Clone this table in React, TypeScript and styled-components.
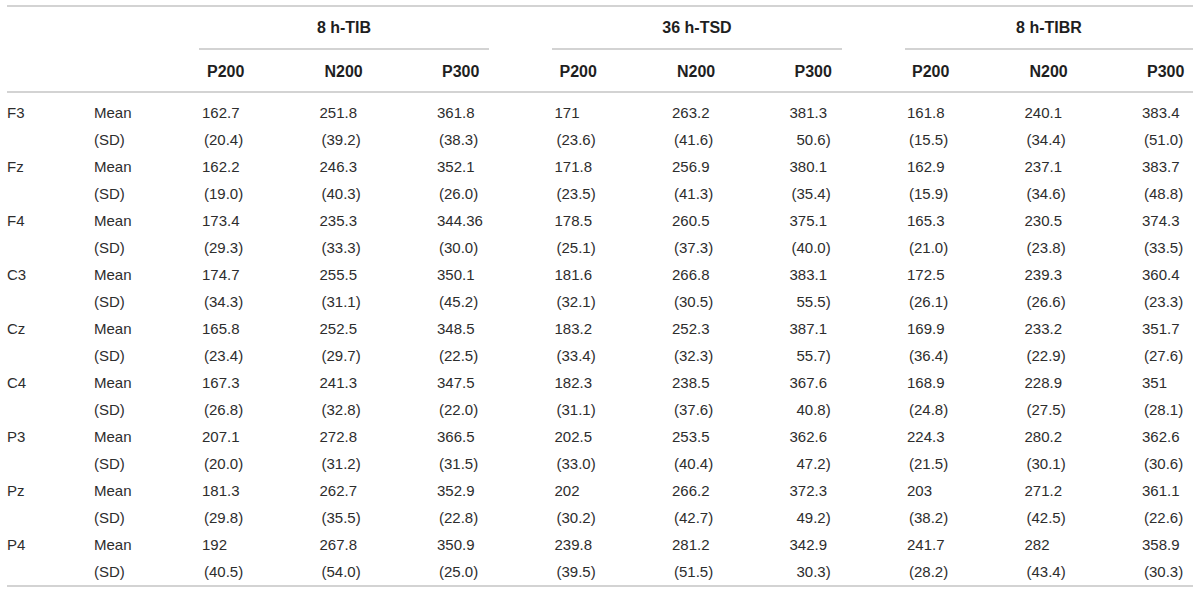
import React from 'react';
import styled, { createGlobalStyle } from 'styled-components';

const GlobalStyle = createGlobalStyle`
  *, *::before, *::after {
    box-sizing: border-box;
  }
  html, body {
    margin: 0;
    padding: 0;
    background: #ffffff;
  }
  body {
    font-family: "Liberation Sans", Arial, Helvetica, sans-serif;
    color: #2d2d2d;
  }
`;

const COLUMNS = '87px 105px repeat(8, 117.5px) 54px';
const RULE = '2px solid #d3d3d3';

const Table = styled.div`
  width: 1186px;
  margin: 5px 7px 0;
  border-top: ${RULE};
  border-bottom: ${RULE};
`;

const GroupRow = styled.div`
  display: flex;
  gap: 63px;
  padding-left: 192px;
  height: 43px;
`;

const GroupLabel = styled.div<{ $last?: boolean }>`
  display: flex;
  align-items: center;
  justify-content: center;
  width: ${({ $last }) => ($last ? '288px' : '290px')};
  border-bottom: ${RULE};
  font-size: 16px;
  font-weight: 700;
  color: #1f1f1f;
`;

const HeadRow = styled.div`
  display: grid;
  grid-template-columns: ${COLUMNS};
  height: 43px;
  align-items: center;
  border-bottom: ${RULE};
`;

const HeadCell = styled.div`
  padding-left: 8px;
  padding-top: 2px;
  font-size: 16px;
  font-weight: 700;
  color: #1f1f1f;
`;

const Body = styled.div`
  padding-top: 6px;
`;

const Row = styled.div`
  display: grid;
  grid-template-columns: ${COLUMNS};
  height: 27px;
  align-items: center;
  font-size: 15px;
`;

const Label = styled.div`
  white-space: nowrap;
`;

const Value = styled.div<{ $indent: number }>`
  padding-left: ${({ $indent }) => $indent}px;
  white-space: nowrap;
`;

type Site = { name: string; mean: string[]; sd: string[] };

const groups = ['8 h-TIB', '36 h-TSD', '8 h-TIBR'];
const components = ['P200', 'N200', 'P300'];

const sites: Site[] = [
  {
    name: 'F3',
    mean: ['162.7', '251.8', '361.8', '171', '263.2', '381.3', '161.8', '240.1', '383.4'],
    sd: ['(20.4)', '(39.2)', '(38.3)', '(23.6)', '(41.6)', '50.6)', '(15.5)', '(34.4)', '(51.0)'],
  },
  {
    name: 'Fz',
    mean: ['162.2', '246.3', '352.1', '171.8', '256.9', '380.1', '162.9', '237.1', '383.7'],
    sd: ['(19.0)', '(40.3)', '(26.0)', '(23.5)', '(41.3)', '(35.4)', '(15.9)', '(34.6)', '(48.8)'],
  },
  {
    name: 'F4',
    mean: ['173.4', '235.3', '344.36', '178.5', '260.5', '375.1', '165.3', '230.5', '374.3'],
    sd: ['(29.3)', '(33.3)', '(30.0)', '(25.1)', '(37.3)', '(40.0)', '(21.0)', '(23.8)', '(33.5)'],
  },
  {
    name: 'C3',
    mean: ['174.7', '255.5', '350.1', '181.6', '266.8', '383.1', '172.5', '239.3', '360.4'],
    sd: ['(34.3)', '(31.1)', '(45.2)', '(32.1)', '(30.5)', '55.5)', '(26.1)', '(26.6)', '(23.3)'],
  },
  {
    name: 'Cz',
    mean: ['165.8', '252.5', '348.5', '183.2', '252.3', '387.1', '169.9', '233.2', '351.7'],
    sd: ['(23.4)', '(29.7)', '(22.5)', '(33.4)', '(32.3)', '55.7)', '(36.4)', '(22.9)', '(27.6)'],
  },
  {
    name: 'C4',
    mean: ['167.3', '241.3', '347.5', '182.3', '238.5', '367.6', '168.9', '228.9', '351'],
    sd: ['(26.8)', '(32.8)', '(22.0)', '(31.1)', '(37.6)', '40.8)', '(24.8)', '(27.5)', '(28.1)'],
  },
  {
    name: 'P3',
    mean: ['207.1', '272.8', '366.5', '202.5', '253.5', '362.6', '224.3', '280.2', '362.6'],
    sd: ['(20.0)', '(31.2)', '(31.5)', '(33.0)', '(40.4)', '47.2)', '(21.5)', '(30.1)', '(30.6)'],
  },
  {
    name: 'Pz',
    mean: ['181.3', '262.7', '352.9', '202', '266.2', '372.3', '203', '271.2', '361.1'],
    sd: ['(29.8)', '(35.5)', '(22.8)', '(30.2)', '(42.7)', '49.2)', '(38.2)', '(42.5)', '(22.6)'],
  },
  {
    name: 'P4',
    mean: ['192', '267.8', '350.9', '239.8', '281.2', '342.9', '241.7', '282', '358.9'],
    sd: ['(40.5)', '(54.0)', '(25.0)', '(39.5)', '(51.5)', '30.3)', '(28.2)', '(43.4)', '(30.3)'],
  },
];

// SD cells sit a little right of the mean; the ones that lost their "(" keep its room
const sdIndent = (text: string) => (text.startsWith('(') ? 5 : 10);

export default function App() {
  return (
    <>
      <GlobalStyle />
      <Table>
        <GroupRow>
          {groups.map((g, i) => (
            <GroupLabel key={g} $last={i === groups.length - 1}>
              {g}
            </GroupLabel>
          ))}
        </GroupRow>
        <HeadRow>
          <div />
          <div />
          {groups.map((g) =>
            components.map((c) => <HeadCell key={g + c}>{c}</HeadCell>)
          )}
        </HeadRow>
        <Body>
          {sites.map((site) => (
            <React.Fragment key={site.name}>
              <Row>
                <Label>{site.name}</Label>
                <Label>Mean</Label>
                {site.mean.map((v, i) => (
                  <Value key={i} $indent={3}>
                    {v}
                  </Value>
                ))}
              </Row>
              <Row>
                <Label />
                <Label>(SD)</Label>
                {site.sd.map((v, i) => (
                  <Value key={i} $indent={sdIndent(v)}>
                    {v}
                  </Value>
                ))}
              </Row>
            </React.Fragment>
          ))}
        </Body>
      </Table>
    </>
  );
}
